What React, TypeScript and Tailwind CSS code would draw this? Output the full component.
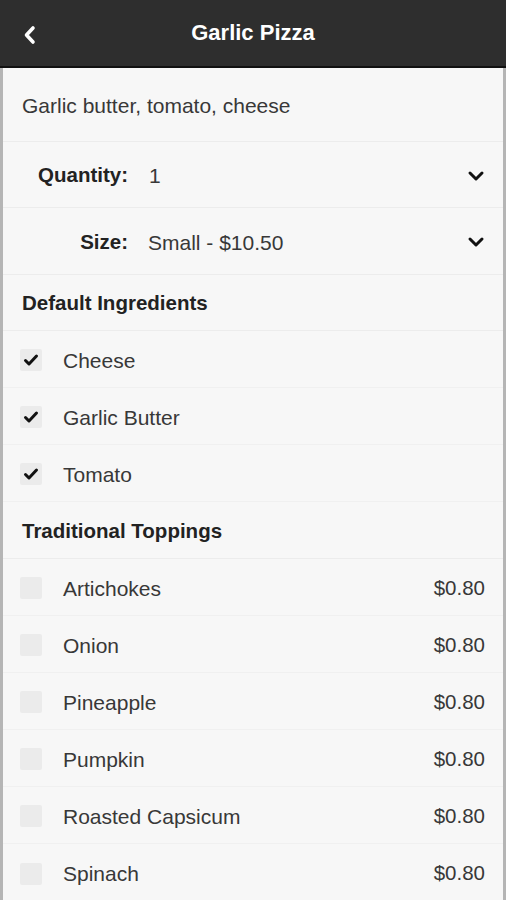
import React from "react";

const font = { fontFamily: '"Liberation Sans", Arial, sans-serif' };

function Chevron() {
  return (
    <svg width="18" height="12" viewBox="0 0 18 12" className="shrink-0">
      <path d="M3 3 L9 9 L15 3" fill="none" stroke="#111" strokeWidth="3" strokeLinecap="round" strokeLinejoin="round" />
    </svg>
  );
}

function Check({ checked }: { checked: boolean }) {
  return (
    <div className="w-[22px] h-[22px] mt-[2px] rounded-[2px] bg-[#ebebeb] flex items-center justify-center shrink-0">
      {checked && (
        <svg width="16" height="14" viewBox="0 0 16 14">
          <path d="M2.5 7.5 L6 11 L13.5 3" fill="none" stroke="#111" strokeWidth="3" strokeLinecap="round" strokeLinejoin="round" />
        </svg>
      )}
    </div>
  );
}

function ItemRow({ label, price, checked, last }: { label: string; price?: string; checked: boolean; last?: boolean }) {
  return (
    <div className={`h-[57px] flex items-center pl-[17px] pr-[18px] ${last ? "" : "border-b border-[#f0f0f0]"}`}>
      <Check checked={checked} />
      <span className="ml-[21px] text-[21px] leading-none pt-[2px] text-[#383838] flex-1">{label}</span>
      {price && <span className="text-[20.5px] leading-none pt-[2px] text-[#383838]">{price}</span>}
    </div>
  );
}

export default function App() {
  const defaults = ["Cheese", "Garlic Butter", "Tomato"];
  const toppings = ["Artichokes", "Onion", "Pineapple", "Pumpkin", "Roasted Capsicum", "Spinach"];
  return (
    <div style={font} className="w-[506px] h-[900px] overflow-hidden bg-[#f7f7f7] flex flex-col">
      <div className="h-[68px] bg-[#2e2e2e] border-b-2 border-[#111] flex items-center relative shrink-0">
        <svg width="16" height="20" viewBox="0 0 16 20" className="absolute left-[22px] top-[25px]">
          <path d="M11 3 L4.5 10 L11 17" fill="none" stroke="#fff" strokeWidth="3.6" strokeLinecap="round" strokeLinejoin="round" />
        </svg>
        <div className="w-full text-center text-white font-bold text-[22px] leading-none">Garlic Pizza</div>
      </div>
      <div className="flex-1 border-l-[3px] border-r-[3px] border-[#b5b5b5] flex flex-col">
        <div className="h-[74px] flex items-center pl-[19px] pt-[2px] border-b border-[#ececec] text-[21px] leading-none text-[#383838]">
          Garlic butter, tomato, cheese
        </div>
        <div className="h-[66px] flex items-center border-b border-[#ececec] pr-[18px] pt-[2px]">
          <span className="w-[125px] text-right font-bold text-[20.5px] leading-none text-[#222]">Quantity:</span>
          <span className="ml-[21px] flex-1 text-[21px] leading-none text-[#383838]">1</span>
          <Chevron />
        </div>
        <div className="h-[67px] flex items-center border-b border-[#ececec] pr-[18px] pt-[2px]">
          <span className="w-[125px] text-right font-bold text-[20.5px] leading-none text-[#222]">Size:</span>
          <span className="ml-[20px] flex-1 text-[21px] leading-none text-[#383838]">Small - $10.50</span>
          <Chevron />
        </div>
        <div className="h-[56px] flex items-center pl-[19px] pt-[2px] border-b border-[#ececec] font-bold text-[20.5px] leading-none text-[#222]">
          Default Ingredients
        </div>
        {defaults.map((d) => (
          <ItemRow key={d} label={d} checked />
        ))}
        <div className="h-[57px] flex items-center pl-[19px] pt-[2px] border-b border-[#ececec] font-bold text-[20.5px] leading-none text-[#222]">
          Traditional Toppings
        </div>
        {toppings.map((t, i) => (
          <ItemRow key={t} label={t} price="$0.80" checked={false} last={i === toppings.length - 1} />
        ))}
      </div>
    </div>
  );
}
